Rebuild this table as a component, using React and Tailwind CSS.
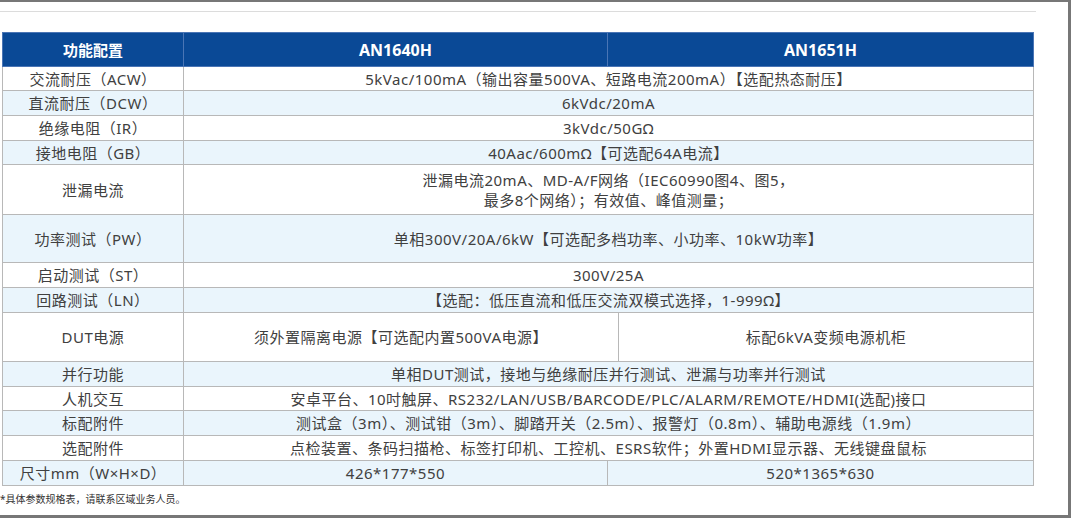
import React from "react";

const font = { fontFamily: "'Noto Sans', 'Noto Sans CJK SC', sans-serif" };

// rows: label, cells [{text, span}], height, shaded
const rows = [
  { label: "交流耐压（ACW）", cells: [{ text: "5kVac/100mA（输出容量500VA、短路电流200mA）【选配热态耐压】", span: 3 }], h: "h-[24px]" },
  { label: "直流耐压（DCW）", cells: [{ text: "6kVdc/20mA", span: 3 }], h: "h-[25px]", shade: true },
  { label: "绝缘电阻（IR）", cells: [{ text: "3kVdc/50GΩ", span: 3 }], h: "h-[25px]" },
  { label: "接地电阻（GB）", cells: [{ text: "40Aac/600mΩ【可选配64A电流】", span: 3 }], h: "h-[24px]", shade: true },
  {
    label: "泄漏电流",
    cells: [{ text: ["泄漏电流20mA、MD-A/F网络（IEC60990图4、图5，", "最多8个网络）；有效值、峰值测量；"], span: 3 }],
    h: "h-[50px]",
  },
  { label: "功率测试（PW）", cells: [{ text: "单相300V/20A/6kW【可选配多档功率、小功率、10kW功率】", span: 3 }], h: "h-[48px]", shade: true },
  { label: "启动测试（ST）", cells: [{ text: "300V/25A", span: 3 }], h: "h-[25px]" },
  { label: "回路测试（LN）", cells: [{ text: "【选配：低压直流和低压交流双模式选择，1-999Ω】", span: 3 }], h: "h-[25px]", shade: true },
  {
    label: "DUT电源",
    cells: [
      { text: "须外置隔离电源【可选配内置500VA电源】", span: 2 },
      { text: "标配6kVA变频电源机柜", span: 1 },
    ],
    h: "h-[49px]",
  },
  { label: "并行功能", cells: [{ text: "单相DUT测试，接地与绝缘耐压并行测试、泄漏与功率并行测试", span: 3 }], h: "h-[25px]", shade: true },
  { label: "人机交互", cells: [{ text: "安卓平台、10吋触屏、RS232/LAN/USB/BARCODE/PLC/ALARM/REMOTE/HDMI(选配)接口", span: 3 }], h: "h-[24px]" },
  { label: "标配附件", cells: [{ text: "测试盒（3m）、测试钳（3m）、脚踏开关（2.5m）、报警灯（0.8m）、辅助电源线（1.9m）", span: 3 }], h: "h-[25px]", shade: true },
  { label: "选配附件", cells: [{ text: "点检装置、条码扫描枪、标签打印机、工控机、ESRS软件；外置HDMI显示器、无线键盘鼠标", span: 3 }], h: "h-[25px]" },
  {
    label: "尺寸mm（W×H×D）",
    cells: [
      { text: "426*177*550", span: 1 },
      { text: "520*1365*630", span: 2 },
    ],
    h: "h-[25px]",
    shade: true,
  },
];

export default function App() {
  return (
    <div
      className="w-[1071px] h-[518px] bg-white border-t-2 border-r-[3px] border-b-[3px] border-[#777777] overflow-hidden text-[#404040]"
      style={font}
    >
      <div className="mt-[9px] w-[1036px] h-px bg-[#dcdcdc]" />
      <table className="ml-[2px] mt-[20px] w-[1031px] table-fixed border-collapse text-[15px] leading-[20px]">
        <colgroup>
          <col className="w-[181px]" />
          <col className="w-[424px]" />
          <col className="w-[11px]" />
          <col className="w-[415px]" />
        </colgroup>
        <thead>
          <tr className="h-[34px] bg-[#0a4996] text-white font-bold">
            <th className="border border-[#4a75b5] text-[15px]">功能配置</th>
            <th className="border border-[#4a75b5] text-[16px]">AN1640H</th>
            <th colSpan={2} className="border border-[#4a75b5] text-[16px]">
              AN1651H
            </th>
          </tr>
        </thead>
        <tbody className="tracking-[0.5px]">
          {rows.map((r) => (
            <tr key={r.label} className={`${r.h} ${r.shade ? "bg-[#eaf5fc]" : "bg-white"}`}>
              <td className="border border-[#b8b8b8] text-center p-0 whitespace-nowrap">{r.label}</td>
              {r.cells.map((c, i) => (
                <td
                  key={i}
                  colSpan={c.span}
                  className="border border-[#b8b8b8] text-center p-0 whitespace-nowrap"
                >
                  {Array.isArray(c.text) ? (
                    <div className="flex flex-col items-center">
                      {c.text.map((t) => (
                        <span key={t}>{t}</span>
                      ))}
                    </div>
                  ) : (
                    c.text
                  )}
                </td>
              ))}
            </tr>
          ))}
        </tbody>
      </table>
      <p className="mt-[6px] text-[10px] leading-[14px] text-[#333333]">*具体参数规格表，请联系区域业务人员。</p>
    </div>
  );
}
